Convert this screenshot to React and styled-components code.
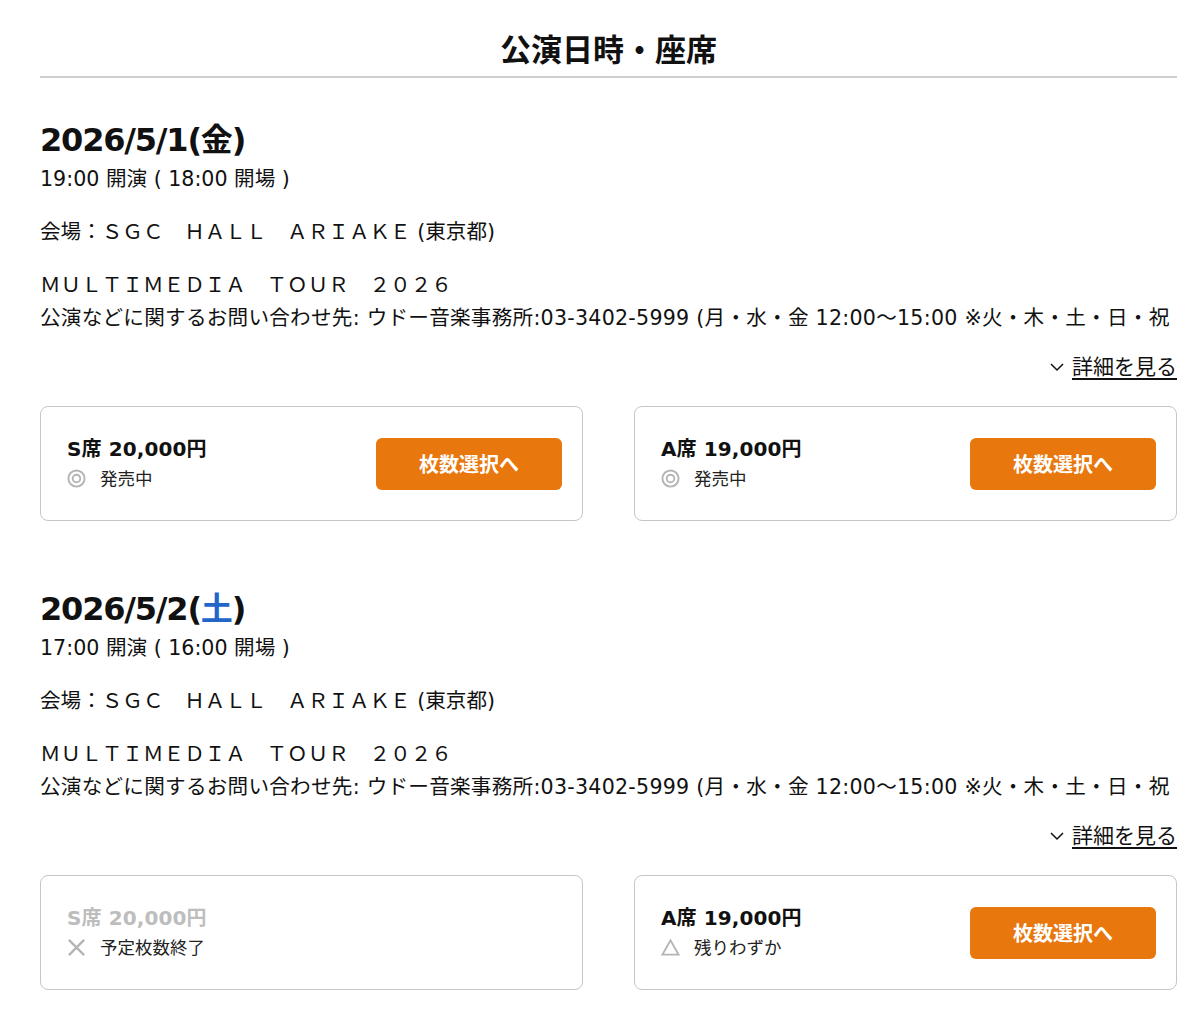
import React from "react";
import styled, { createGlobalStyle } from "styled-components";

const GlobalStyle = createGlobalStyle`
  body {
    margin: 0;
    background: #fff;
    color: #111;
    font-family: "DejaVu Sans", "Noto Sans CJK JP", sans-serif;
  }
`;

const Page = styled.div`
  width: 1137px;
  margin-left: 40px;
  padding-top: 27px;
`;

const Heading = styled.h1`
  margin: 0;
  font-family: "Noto Sans CJK JP", sans-serif;
  font-size: 31px;
  line-height: 42px;
  font-weight: 700;
  text-align: center;
  padding-bottom: 7px;
  border-bottom: 2px solid #cfcfcf;
`;

const Show = styled.section`
  padding-top: ${(p) => (p.$first ? "42px" : "68px")};
`;

const DateTitle = styled.h2`
  margin: 0;
  font-size: 32px;
  line-height: 40px;
  font-weight: 700;
  letter-spacing: -1.2px;
`;

const Weekday = styled.span`
  color: ${(p) => p.$color || "inherit"};
`;

const Line = styled.p`
  margin: ${(p) => p.$gap || 5}px 0 0;
  font-size: 20.6px;
  line-height: 28px;
  letter-spacing: ${(p) => p.$spacing || 0}px;
  white-space: nowrap;
`;

const DetailRow = styled.div`
  margin-top: 21px;
  display: flex;
  justify-content: flex-end;
  align-items: center;
  gap: 8px;
  font-size: 21px;
  line-height: 28px;
`;

const DetailLink = styled.a`
  color: #111;
  text-decoration: underline;
  text-underline-offset: 4px;
  cursor: pointer;
`;

const Seats = styled.div`
  margin-top: 25px;
  display: grid;
  grid-template-columns: 1fr 1fr;
  gap: 51px;
`;

const Card = styled.div`
  height: 115px;
  box-sizing: border-box;
  border: 1.5px solid #c6c6c6;
  border-radius: 8px;
  padding: 0 20px 0 26px;
  display: flex;
  align-items: center;
  justify-content: space-between;
`;

const SeatInfo = styled.div`
  display: flex;
  flex-direction: column;
  gap: 4px;
`;

const Price = styled.div`
  font-size: 20px;
  line-height: 26px;
  font-weight: 700;
  letter-spacing: 0.1px;
  color: ${(p) => (p.$disabled ? "#bdbdbd" : "#111")};
`;

const Status = styled.div`
  display: flex;
  align-items: center;
  gap: 14px;
  font-size: 17.5px;
  line-height: 26px;
  color: #222;
`;

const SelectButton = styled.button`
  width: 186px;
  height: 52px;
  border: none;
  border-radius: 6px;
  background: #e8770e;
  color: #fff;
  font-family: "Noto Sans CJK JP", sans-serif;
  font-size: 20px;
  font-weight: 700;
  cursor: pointer;
`;

const StatusIcon = ({ type }) => {
  if (type === "ok") {
    return (
      <svg width="19" height="19" viewBox="0 0 20 20">
        <circle cx="10" cy="10" r="8.5" fill="none" stroke="#b4b4b4" strokeWidth="2" />
        <circle cx="10" cy="10" r="4" fill="none" stroke="#b4b4b4" strokeWidth="2" />
      </svg>
    );
  }
  if (type === "few") {
    return (
      <svg width="19" height="19" viewBox="0 0 20 20">
        <path d="M10 2.5 L18.5 17.5 H1.5 Z" fill="none" stroke="#b4b4b4" strokeWidth="2" strokeLinejoin="miter" />
      </svg>
    );
  }
  return (
    <svg width="19" height="19" viewBox="0 0 20 20">
      <path d="M2 2 L18 18 M18 2 L2 18" stroke="#b4b4b4" strokeWidth="2.4" />
    </svg>
  );
};

const Chevron = () => (
  <svg width="14" height="10" viewBox="0 0 14 10">
    <path d="M1 2 L7 8 L13 2" fill="none" stroke="#111" strokeWidth="1.5" />
  </svg>
);

const statusText = { ok: "発売中", few: "残りわずか", none: "予定枚数終了" };

const SeatCard = ({ seat }) => (
  <Card>
    <SeatInfo>
      <Price $disabled={seat.status === "none"}>{seat.label}</Price>
      <Status>
        <StatusIcon type={seat.status} />
        {statusText[seat.status]}
      </Status>
    </SeatInfo>
    {seat.status !== "none" && <SelectButton>枚数選択へ</SelectButton>}
  </Card>
);

const shows = [
  {
    date: "2026/5/1",
    day: "金",
    time: "19:00 開演 ( 18:00 開場 )",
    seats: [
      { label: "S席 20,000円", status: "ok" },
      { label: "A席 19,000円", status: "ok" },
    ],
  },
  {
    date: "2026/5/2",
    day: "土",
    dayColor: "#2466c8",
    time: "17:00 開演 ( 16:00 開場 )",
    seats: [
      { label: "S席 20,000円", status: "none" },
      { label: "A席 19,000円", status: "few" },
    ],
  },
];

const App = () => (
  <>
    <GlobalStyle />
    <Page>
      <Heading>公演日時・座席</Heading>
      {shows.map((show, i) => (
        <Show key={show.date} $first={i === 0}>
          <DateTitle>
            {show.date}(<Weekday $color={show.dayColor}>{show.day}</Weekday>)
          </DateTitle>
          <Line>{show.time}</Line>
          <Line $gap={25}>会場：ＳＧＣ　ＨＡＬＬ　ＡＲＩＡＫＥ (東京都)</Line>
          <Line $gap={25}>ＭＵＬＴＩＭＥＤＩＡ　ＴＯＵＲ　２０２６</Line>
          <Line $spacing={0.25}>
            公演などに関するお問い合わせ先: ウドー音楽事務所:03-3402-5999 (月・水・金 12:00〜15:00 ※火・木・土・日・祝
          </Line>
          <DetailRow>
            <Chevron />
            <DetailLink>詳細を見る</DetailLink>
          </DetailRow>
          <Seats>
            {show.seats.map((seat) => (
              <SeatCard key={seat.label} seat={seat} />
            ))}
          </Seats>
        </Show>
      ))}
    </Page>
  </>
);

export default App;
